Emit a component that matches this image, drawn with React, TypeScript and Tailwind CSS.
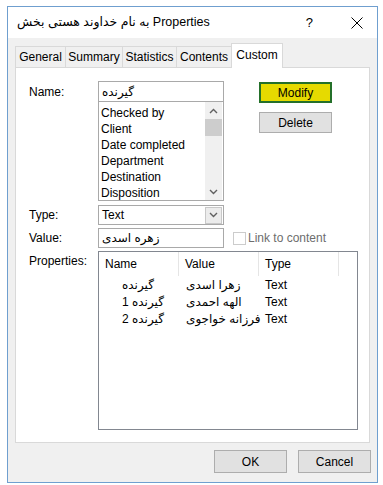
import React from "react";

const F = { fontFamily: '"Liberation Sans", "DejaVu Sans", sans-serif' };

function Chevron({ up }: { up?: boolean }) {
  return (
    <svg width="9" height="6" viewBox="0 0 9 6">
      <path d={up ? "M1 5 L4.5 1.5 L8 5" : "M1 1 L4.5 4.5 L8 1"} fill="none" stroke="#606060" strokeWidth="1.4" />
    </svg>
  );
}

export default function App() {
  const items = ["Checked by", "Client", "Date completed", "Department", "Destination", "Disposition"];
  const rows = [
    ["گیرنده", "زهرا اسدی"],
    ["گیرنده 1", "الهه احمدی"],
    ["گیرنده 2", "فرزانه خواجوی"],
  ];
  const tabs: [string, string][] = [
    ["General", "w-[50px]"],
    ["Summary", "w-[57px]"],
    ["Statistics", "w-[54px]"],
    ["Contents", "w-[55px]"],
  ];
  return (
    <div className="w-[383px] h-[485px] bg-white pt-[6px] pl-[7px] text-[12px] text-black leading-none" style={F}>
      <div className="w-[371px] h-[477px] border border-[#6f9fcf] bg-[#f0f0f0] flex flex-col">
        {/* title bar */}
        <div className="h-[31px] bg-white flex items-center pl-[9px] shrink-0">
          <span className="text-[12.5px] whitespace-nowrap">به نام خداوند هستی بخش Properties</span>
          <span className="ml-auto mr-[38px] text-[13px]">?</span>
          <svg width="12" height="12" viewBox="0 0 12 12" className="mr-[14px]">
            <path d="M0.5 0.5 L11.5 11.5 M11.5 0.5 L0.5 11.5" stroke="#000" strokeWidth="1" />
          </svg>
        </div>
        {/* tabs */}
        <div className="flex items-end pl-[7px] mt-[5px] h-[24px] shrink-0 relative z-10">
          {tabs.map(([t, w]) => (
            <div key={t} className={`${w} h-[21px] flex items-center justify-center border border-[#d9d9d9] border-r-0 border-b-0 bg-[#f0f0f0]`}>
              {t}
            </div>
          ))}
          <div className="h-[25px] w-[52px] mb-[-1px] flex items-start pt-[5px] justify-center border border-[#d9d9d9] border-b-0 bg-white">
            Custom
          </div>
        </div>
        {/* panel */}
        <div className="ml-[7px] w-[355px] h-[376px] bg-white border border-[#d9d9d9] pt-[13px] pl-[13px] shrink-0">
          <div className="flex">
            <div className="w-[69px] pt-[5px]">Name:</div>
            <div className="w-[126px] flex flex-col">
              <div className="h-[21px] border border-[#a9a9a9] flex items-center px-[3px]">
                <span dir="rtl">گیرنده</span>
              </div>
              <div className="h-[99px] border border-[#a9a9a9] border-t-0 flex">
                <div className="flex-1 pt-[3px] pl-[2px]">
                  {items.map((i) => (
                    <div key={i} className="h-[16px] flex items-center">{i}</div>
                  ))}
                </div>
                <div className="w-[17px] bg-[#f0f0f0] flex flex-col mr-[1px]">
                  <div className="h-[17px] flex items-center justify-center"><Chevron up /></div>
                  <div className="h-[17px] bg-[#cdcdcd]"></div>
                  <div className="flex-1"></div>
                  <div className="h-[17px] flex items-center justify-center"><Chevron /></div>
                </div>
              </div>
            </div>
            <div className="ml-[35px] flex flex-col gap-[9px] pt-[1px]">
              <div className="w-[73px] h-[21px] bg-[#e6da00] border-2 border-[#24702a] flex items-center justify-center">Modify</div>
              <div className="w-[73px] h-[21px] bg-[#e1e1e1] border border-[#adadad] flex items-center justify-center">Delete</div>
            </div>
          </div>
          <div className="flex mt-[4px] items-center">
            <div className="w-[69px]">Type:</div>
            <div className="w-[126px] h-[20px] border border-[#a9a9a9] flex items-center pl-[3px] pr-[1px]">
              <span className="flex-1">Text</span>
              <div className="w-[17px] h-[17px] bg-[#ececec] border border-[#c8c8c8] flex items-center justify-center"><Chevron /></div>
            </div>
          </div>
          <div className="flex mt-[3px] items-center">
            <div className="w-[69px]">Value:</div>
            <div className="w-[126px] h-[20px] border border-[#a9a9a9] flex items-center px-[3px]">
              <span dir="rtl">زهره اسدی</span>
            </div>
            <div className="ml-[9px] w-[13px] h-[13px] border border-[#cccccc] bg-white"></div>
            <span className="ml-[2px] text-[#6d6d6d]">Link to content</span>
          </div>
          <div className="flex mt-[3px]">
            <div className="w-[69px] pt-[4px]">Properties:</div>
            <div className="w-[260px] h-[179px] border border-[#828790] flex flex-col">
              <div className="h-[24px] flex items-stretch">
                {["Name", "Value", "Type"].map((h) => (
                  <div key={h} className="w-[80px] border-r border-[#e5e5e5] flex items-center pl-[6px]">{h}</div>
                ))}
              </div>
              {rows.map(([n, v]) => (
                <div key={n} className="h-[17px] flex items-center whitespace-nowrap">
                  <div className="w-[80px] pl-[23px]"><span dir="rtl">{n}</span></div>
                  <div className="w-[80px] pl-[7px]"><span dir="rtl">{v}</span></div>
                  <div className="w-[80px] pl-[6px]">Text</div>
                </div>
              ))}
            </div>
          </div>
        </div>
        {/* footer */}
        <div className="flex justify-end gap-[11px] pr-[6px] mt-[7px]">
          <div className="w-[73px] h-[23px] bg-[#e1e1e1] border border-[#adadad] flex items-center justify-center">OK</div>
          <div className="w-[73px] h-[23px] bg-[#e1e1e1] border border-[#adadad] flex items-center justify-center">Cancel</div>
        </div>
      </div>
    </div>
  );
}
